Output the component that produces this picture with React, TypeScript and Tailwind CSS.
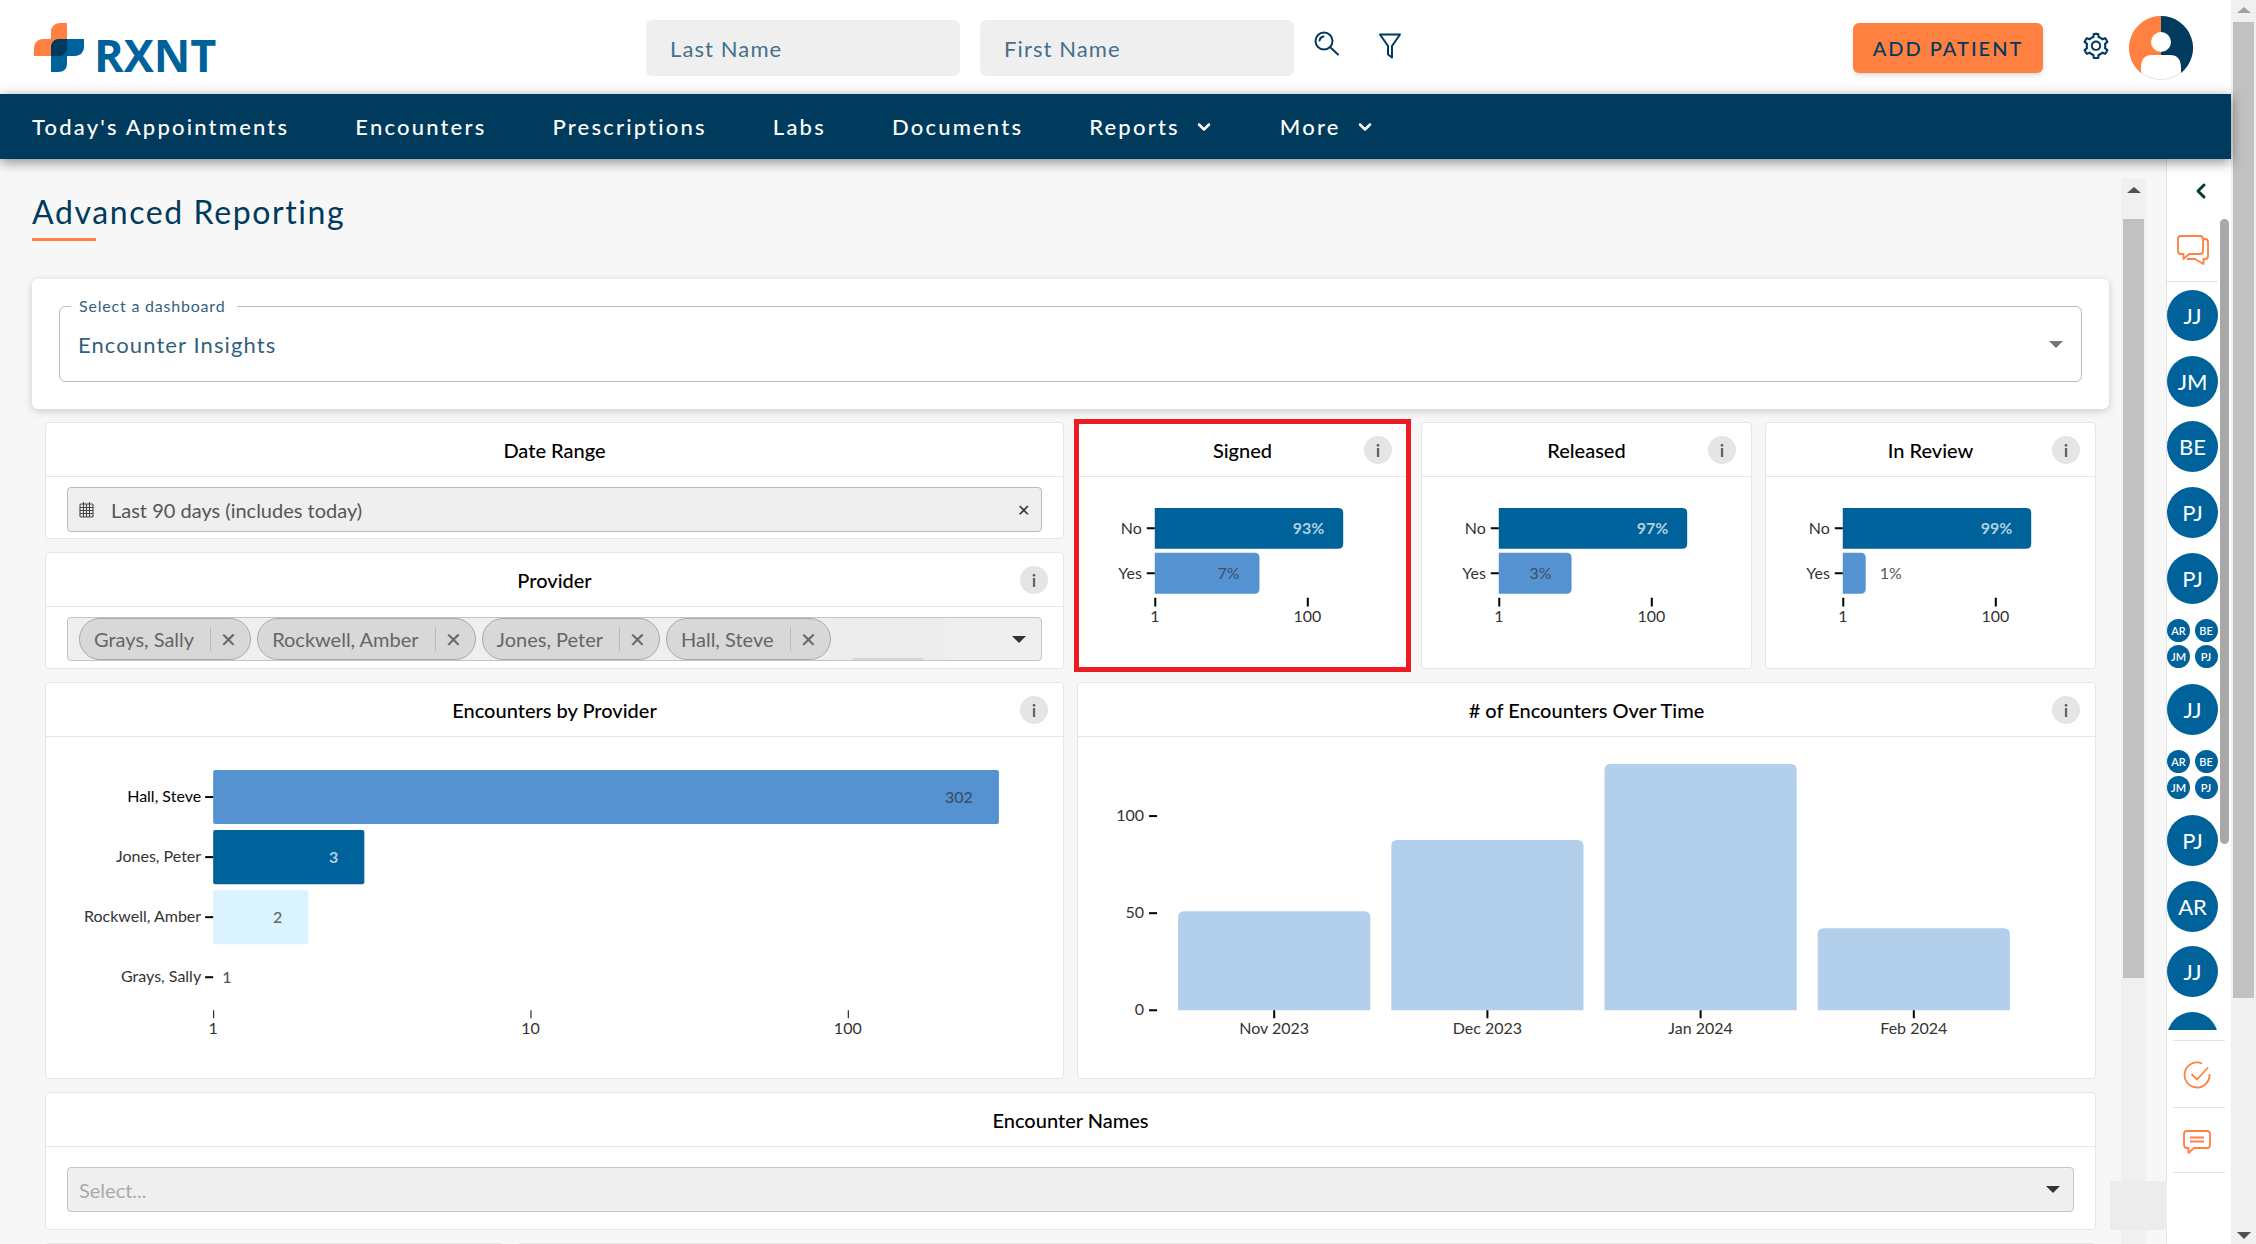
import { ReactNode } from "react";
import { AiOutlineSetting } from "react-icons/ai";
import { ChevronDown, ChevronLeft } from "lucide-react";

const navItems = [
  { label: "Today's Appointments" },
  { label: "Encounters" },
  { label: "Prescriptions" },
  { label: "Labs" },
  { label: "Documents" },
  { label: "Reports", menu: true },
  { label: "More", menu: true },
];

const providers = ["Grays, Sally", "Rockwell, Amber", "Jones, Peter", "Hall, Steve"];

const group = ["AR", "BE", "JM", "PJ"];
const contacts: (string | string[])[] = [
  "JJ", "JM", "BE", "PJ", "PJ", group, "JJ", group, "PJ", "AR", "JJ", "",
];

function Logo() {
  return (
    <a href="#" aria-label="RXNT" className="flex items-end gap-2.5">
      <svg width="50" height="50" viewBox="0 0 50 50" aria-hidden="true">
        <path d="M17 0V16H9C4 16 0 20 0 25V33H25C30 33 33 29 33 25V0H26C21 0 17 4 17 8Z" fill="#ff8040" />
        <path d="M17 25C17 20 20 16 25 16H50V24C50 29 46 33 41 33H33V40C33 46 30 49 24 49H17Z" fill="#00629b" />
        <path d="M17 33V25C17 20 20 16 25 16H33V25C33 29 30 33 25 33Z" fill="#003a5d" />
      </svg>
      <span className="font-['Open_Sans',sans-serif] text-[45px] leading-[36px] font-bold text-[#00629b]">RXNT</span>
    </a>
  );
}

function SearchIcon() {
  return (
    <svg width="26" height="26" viewBox="0 0 26 26" fill="none" stroke="#003a5d" strokeWidth="2" strokeLinecap="round">
      <circle cx="10" cy="10" r="8.5" />
      <path d="M16.5 16.5L24 23.5M5.5 9.5A5 5 0 0 1 9.5 5.5" />
    </svg>
  );
}

function FilterIcon() {
  return (
    <svg width="24" height="26" viewBox="0 0 24 26" fill="none" stroke="#003a5d" strokeWidth="2" strokeLinejoin="round">
      <path d="M2 1.5H22L14 13V24.5L10 21.5V13Z" />
    </svg>
  );
}

function UserAvatar() {
  return (
    <svg width="64" height="64" viewBox="0 0 64 64">
      <circle cx="32" cy="32" r="31.5" fill="#fff" stroke="#dde3e8" />
      <path d="M32 0A32 32 0 0 0 12 57V52Q12 39 23 39H32Z" fill="#ff8040" />
      <path d="M32 0A32 32 0 0 1 52 57V52Q52 39 41 39H32Z" fill="#003a5d" />
      <circle cx="32" cy="26" r="10" fill="#fff" />
    </svg>
  );
}

function ChatsIcon() {
  return (
    <svg width="32" height="30" viewBox="0 0 32 30" fill="none" stroke="#ff8040" strokeWidth="1.8" strokeLinejoin="round">
      <path d="M4 1H23Q26 1 26 4V16Q26 19 23 19H12L6.5 24V19H4Q1 19 1 16V4Q1 1 4 1Z" />
      <path d="M26 4H28Q31 4 31 7V21Q31 24 28 24H26.500V29L18 24H10" />
    </svg>
  );
}

function TaskIcon() {
  return (
    <svg width="28" height="28" viewBox="0 0 28 28" fill="none" stroke="#ff8040" strokeWidth="1.8">
      <path d="M19 2.500A12.500 12.500 0 1 0 26.500 13" />
      <path d="M8.500 13L14 18.500L25 6.500" />
    </svg>
  );
}

function MessageIcon() {
  return (
    <svg width="28" height="24" viewBox="0 0 28 24" fill="none" stroke="#ff8040" strokeWidth="1.8" strokeLinejoin="round">
      <path d="M4 1H24Q27 1 27 4V15Q27 18 24 18H11L5.500 23V18H4Q1 18 1 15V4Q1 1 4 1Z" />
      <path d="M7 7.500H21M7 11.500H21" />
    </svg>
  );
}

function CalendarIcon() {
  return (
    <svg width="16" height="16" viewBox="0 0 16 16" fill="none" stroke="#444" strokeWidth="1.1">
      <rect x="1" y="2" width="13" height="13" rx="1" />
      <path d="M1 5.500H14M1 8.500H14M1 11.500H14M4.500 0V15M7.500 2V15M10.500 0V15" />
    </svg>
  );
}

function Caret({ className = "", up = false }: { className?: string; up?: boolean }) {
  return (
    <svg width="14" height="8" viewBox="0 0 14 8" className={className} fill="currentColor" aria-hidden="true">
      <path d={up ? "M0 7L7 1L14 7Z" : "M0 1L7 8L14 1Z"} />
    </svg>
  );
}

function Card({
  title,
  info = false,
  className = "",
  children,
}: {
  title: string;
  info?: boolean;
  className?: string;
  children: ReactNode;
}) {
  return (
    <section className={`flex flex-col border border-[#e6e6e6] bg-white ${className || "rounded"}`}>
      <header className="flex h-[54px] shrink-0 items-center border-b border-[#e6e6e6] px-[15px]">
        <span className="w-7" />
        <h2 className="flex-1 text-center text-xl font-medium text-black">{title}</h2>
        <span className="flex w-7 justify-end">
          {info && (
            <button
              type="button"
              aria-label={`About ${title}`}
              className="size-7 rounded-full bg-[#e5e5e5] text-lg leading-7 font-semibold text-[#555]"
            >
              i
            </button>
          )}
        </span>
      </header>
      {children}
    </section>
  );
}

type SignChart = { no: string; yes: string; yesWidth: number; outside?: boolean };

// 是/否 比例图
function YesNoChart({ no, yes, yesWidth, outside }: SignChart) {
  return (
    <svg viewBox="0 0 330 190" className="w-full text-base" role="img">
      <path d="M77 31H261Q266 31 266 36V67Q266 72 261 72H77Z" fill="#00629b" />
      <path
        d={`M77 76H${72 + yesWidth}q5 0 5 5v31q0 5 -5 5H77Z`}
        fill="#5592d2"
      />
      <path d="M69 51.5H77M69 96.500H77M77.500 121V130M230.500 121V130" stroke="#000" strokeWidth="2" />
      <g fill="#333" fontSize="16">
        <text x="64" y="57" textAnchor="end">No</text>
        <text x="64" y="102" textAnchor="end">Yes</text>
        <text x="77" y="145" textAnchor="middle">1</text>
        <text x="230" y="145" textAnchor="middle">100</text>
      </g>
      <text x="247" y="57" textAnchor="end" fill="#b3cfe1" fontWeight="700">{no}</text>
      <text x={outside ? 114 : 57 + yesWidth} y="102" textAnchor={outside ? "start" : "end"} fill={outside ? "#555" : "#3b4f68"}>
        {yes}
      </text>
    </svg>
  );
}

const encounterRows = [
  { name: "Hall, Steve", value: 302, width: 785, fill: "#5592d2", text: "#3b4f68", weight: 500 },
  { name: "Jones, Peter", value: 3, width: 151, fill: "#00629b", text: "#b3cfe1", weight: 700 },
  { name: "Rockwell, Amber", value: 2, width: 95, fill: "#daf3ff", text: "#666", weight: 500 },
  { name: "Grays, Sally", value: 1, width: 0, fill: "none", text: "#555", weight: 500 },
];

function ProviderChart() {
  return (
    <svg viewBox="0 0 1016 341" className="w-full text-base" role="img">
      {encounterRows.map((row, i) => {
        const y = 33 + i * 60;
        return (
          <g key={row.name}>
            <rect x="167" y={y} width={row.width} height="54" rx="2" fill={row.fill} />
            <path d={`M159 ${y + 27}H167`} stroke="#000" strokeWidth="2" />
            <text x="155" y={y + 32} textAnchor="end" fontSize="16" fill={i ? "#333" : "#000"}>{row.name}</text>
            <text
              x={row.width ? 141 + row.width : 176}
              y={y + 33}
              textAnchor={row.width ? "end" : "start"}
              fill={row.text}
              fontWeight={row.weight}
            >
              {row.value}
            </text>
          </g>
        );
      })}
      {["1", "10", "100"].map((tick, i) => (
        <g key={tick}>
          <path d={`M${167.5 + i * 317} 273V281`} stroke="#000" />
          <text x={167 + i * 317} y="297" textAnchor="middle" fontSize="16" fill="#333">{tick}</text>
        </g>
      ))}
    </svg>
  );
}

const months = [
  { label: "Nov 2023", height: 99 },
  { label: "Dec 2023", height: 170 },
  { label: "Jan 2024", height: 246 },
  { label: "Feb 2024", height: 82 },
];

function TimeChart() {
  return (
    <svg viewBox="0 0 1016 341" className="w-full" role="img">
      {months.map((month, i) => {
        const x = 100 + i * 213;
        const top = 273 - month.height;
        return (
          <g key={month.label}>
            <path d={`M${x} 273V${top + 6}q0 -6 6 -6H${x + 186}q6 0 6 6V273Z`} fill="#b2d0ec" />
            <path d={`M${x + 96} 273V281`} stroke="#000" strokeWidth="2" />
            <text x={x + 96} y="297" textAnchor="middle" fontSize="16" fill="#333">{month.label}</text>
          </g>
        );
      })}
      {[100, 50, 0].map((tick, i) => (
        <g key={tick}>
          <path d={`M71 ${79 + i * 97}H79`} stroke="#000" strokeWidth="2" />
          <text x="66" y={84 + i * 97} textAnchor="end" fontSize="16" fill="#333">{tick}</text>
        </g>
      ))}
    </svg>
  );
}

function Header() {
  return (
    <header className="flex h-[94px] shrink-0 items-center bg-white pt-0.5 pr-[38px] pl-[34px]">
      <div className="w-[612px]">
        <Logo />
      </div>
      <form className="flex items-center gap-5">
        <input
          aria-label="Last Name"
          placeholder="Last Name"
          className="h-14 w-[314px] rounded-md bg-[#efefef] px-6 text-[22px] tracking-wider placeholder:text-[#44708c]"
        />
        <input
          aria-label="First Name"
          placeholder="First Name"
          className="h-14 w-[314px] rounded-md bg-[#efefef] px-6 text-[22px] tracking-wider placeholder:text-[#44708c]"
        />
        <button type="button" aria-label="Search" className="pb-2"><SearchIcon /></button>
        <button type="button" aria-label="Filter" className="ml-[18px] pb-1"><FilterIcon /></button>
      </form>
      <div className="ml-auto flex items-center">
        <button
          type="button"
          className="h-[50px] w-[190px] rounded-md bg-[#ff8040] text-xl font-medium tracking-widest text-[#003a5d] shadow-md"
        >
          ADD PATIENT
        </button>
        <button type="button" aria-label="Settings" className="mr-[18px] ml-[38px] pb-1 text-[#003a5d]">
          <AiOutlineSetting size={30} />
        </button>
        <button type="button" aria-label="Account"><UserAvatar /></button>
      </div>
    </header>
  );
}

function NavBar() {
  return (
    <nav className="z-10 flex h-[65px] shrink-0 items-center gap-[66px] bg-[#003a5d] px-8 shadow-[0_3px_12px_rgba(0,0,0,0.45)]">
      {navItems.map((item) => (
        <a key={item.label} href="#" className="flex items-center gap-3.5 text-[22px] font-medium tracking-widest text-white">
          {item.label}
          {item.menu && <ChevronDown size={20} strokeWidth={3} />}
        </a>
      ))}
    </nav>
  );
}

function DashboardPicker() {
  return (
    <div className="rounded-md bg-white px-[27px] py-[27px] shadow-[0_2px_8px_rgba(0,0,0,0.18)]">
      <div className="relative">
        <label htmlFor="dashboard" className="absolute -top-3 left-3 bg-white pr-3 pl-2 text-base tracking-wider text-[#335f7d]">
          Select a dashboard
        </label>
        <select
          id="dashboard"
          className="block h-[76px] w-full appearance-none rounded-md border border-[#bdbdbd] px-[18px] text-[22px] tracking-wider text-[#335f7d]"
        >
          <option>Encounter Insights</option>
        </select>
        <Caret className="pointer-events-none absolute top-[34px] right-[19px] text-[#757575]" />
      </div>
    </div>
  );
}

function Chip({ label }: { label: string }) {
  return (
    <span className="flex h-[42px] items-center rounded-full border border-[#aaa] bg-[#d8d8d8] pl-3.5 text-[#666]">
      {label}
      <button type="button" aria-label={`Remove ${label}`} className="ml-4 h-6 w-10 border-l border-[#bbb] pr-1 leading-6">
        ✕
      </button>
    </span>
  );
}

function Dashboard() {
  return (
    <div className="mt-[13px] grid grid-cols-2 gap-[13px] px-[13px]">
      <div className="flex flex-col gap-[13px]">
        <Card title="Date Range" className="h-[117px] rounded">
          <div className="mx-[21px] mt-2.5 flex h-[45px] items-center rounded-sm border border-[#bbb] bg-[#efefef] px-[11px] text-xl text-[#555]">
            <CalendarIcon />
            <span className="ml-4">Last 90 days (includes today)</span>
            <button type="button" aria-label="Clear date range" className="ml-auto text-base text-[#333]">✕</button>
          </div>
        </Card>
        <Card title="Provider" info className="h-[117px] rounded">
          <div className="mx-[21px] mt-2.5 flex h-[44px] items-center gap-1.5 rounded-sm border border-[#c4c4c4] bg-[#efefef] px-[11px] text-xl">
            {providers.map((name) => (
              <Chip key={name} label={name} />
            ))}
            <span className="-ml-1.5 flex h-full w-[114px] justify-center bg-[#ececec]">
              <span className="w-[70px] border-b-2 border-[#d4d4d4]" />
            </span>
            <button type="button" aria-label="Choose providers" className="ml-auto pr-1">
              <Caret className="text-[#333]" />
            </button>
          </div>
        </Card>
      </div>
      <div className="grid grid-cols-3 gap-[13px]">
        <Card title="Signed" info className="outline-5 -outline-offset-2 outline-[#ed1c24]">
          <YesNoChart no="93%" yes="7%" yesWidth={105} />
        </Card>
        <Card title="Released" info>
          <YesNoChart no="97%" yes="3%" yesWidth={73} />
        </Card>
        <Card title="In Review" info>
          <YesNoChart no="99%" yes="1%" yesWidth={23} outside />
        </Card>
      </div>
      <Card title="Encounters by Provider" info>
        <ProviderChart />
      </Card>
      <Card title="# of Encounters Over Time" info>
        <TimeChart />
      </Card>
      <Card title="Encounter Names" className="col-span-2 h-[138px] rounded">
        <div className="relative mx-[21px] mt-5">
          <select
            aria-label="Encounter Names"
            className="block h-[45px] w-full appearance-none rounded-sm border border-[#c4c4c4] bg-[#efefef] px-[11px] text-xl text-[#aaa]"
          >
            <option>Select...</option>
          </select>
          <Caret className="pointer-events-none absolute top-[18px] right-[14px] text-[#333]" />
        </div>
      </Card>
      <div className="col-span-2 flex gap-[13px]">
        <div className="h-40 w-[459px] rounded border border-[#e6e6e6] bg-white" />
        <div className="h-40 flex-1 rounded border border-[#e6e6e6] bg-white" />
      </div>
    </div>
  );
}

function ContactRail() {
  return (
    <aside className="flex w-[65px] shrink-0 flex-col border-l border-[#e3e3e3] bg-white">
      <button type="button" aria-label="Expand" className="mt-4 flex h-8 items-center justify-center pl-1 text-[#00402b]">
        <ChevronLeft size={24} strokeWidth={3} />
      </button>
      <div className="mt-3 flex">
        <div className="flex w-[51px] flex-col">
          <button type="button" aria-label="Chats" className="flex h-[63px] items-center justify-center border-b border-[#e3e3e3]">
            <ChatsIcon />
          </button>
          <div className="mt-2 h-[740px] overflow-hidden">
            <ul className="flex h-[773px] flex-col justify-between">
              {contacts.map((contact, i) => (
                <li key={i}>
                  {Array.isArray(contact) ? (
                    <button type="button" className="grid size-[51px] grid-cols-2 content-center justify-between gap-x-1 gap-y-[3px]">
                      {contact.map((initials) => (
                        <span
                          key={initials}
                          className="size-[23px] rounded-full bg-[#00629b] text-center text-[11px] leading-[23px] font-semibold text-white"
                        >
                          {initials}
                        </span>
                      ))}
                    </button>
                  ) : (
                    <button type="button" className="block size-[51px] rounded-full bg-[#00629b] text-[22px] text-white">
                      {contact}
                    </button>
                  )}
                </li>
              ))}
            </ul>
          </div>
        </div>
        <div className="ml-0.5 h-[625px] w-[9px] rounded-full bg-[#a8a8a8]" />
      </div>
      <div className="mx-1.5 mt-[10px] flex flex-col border-t border-[#e3e3e3] pt-px">
        <button type="button" aria-label="Tasks" className="flex h-[66px] items-center justify-center border-b border-[#e3e3e3] pr-1">
          <TaskIcon />
        </button>
        <button type="button" aria-label="Messages" className="flex h-[65px] items-center justify-center border-b border-[#e3e3e3] pt-1 pr-1">
          <MessageIcon />
        </button>
      </div>
    </aside>
  );
}

export default function App() {
  return (
    <div className="flex h-screen overflow-hidden bg-[#f7f7f7] font-[Lato,'Open_Sans',sans-serif]">
      <div className="flex min-w-0 flex-1 flex-col">
        <Header />
        <NavBar />
        <div className="relative flex min-h-0 flex-1">
          <main className="min-w-0 flex-1 overflow-hidden pr-3 pl-8">
            <h1 className="mt-8 text-[32px] leading-[42px] tracking-wider text-[#003a5d]">Advanced Reporting</h1>
            <div className="mt-[5px] mb-[38px] h-[3px] w-16 bg-[#ff8040]" />
            <DashboardPicker />
            <Dashboard />
          </main>
          <div className="mt-[19px] flex w-[25px] flex-col items-center bg-[#f0f0f0]">
            <Caret up className="mt-2 shrink-0 text-[#505050]" />
            <div className="mt-[25px] h-[759px] w-[21px] shrink-0 bg-[#c1c1c1]" />
          </div>
          <div className="w-5" />
          <ContactRail />
          <div className="absolute right-16 bottom-[14px] h-[49px] w-[57px] bg-[#ececec]" />
        </div>
      </div>
      <div className="flex w-[25px] flex-col items-center bg-[#f0f0f0]">
        <Caret up className="mt-[6px] text-[#a0a0a0]" />
        <div className="mt-2 h-[976px] w-[21px] bg-[#c1c1c1]" />
        <Caret className="mt-auto mb-[5px] text-[#505050]" />
      </div>
    </div>
  );
}
